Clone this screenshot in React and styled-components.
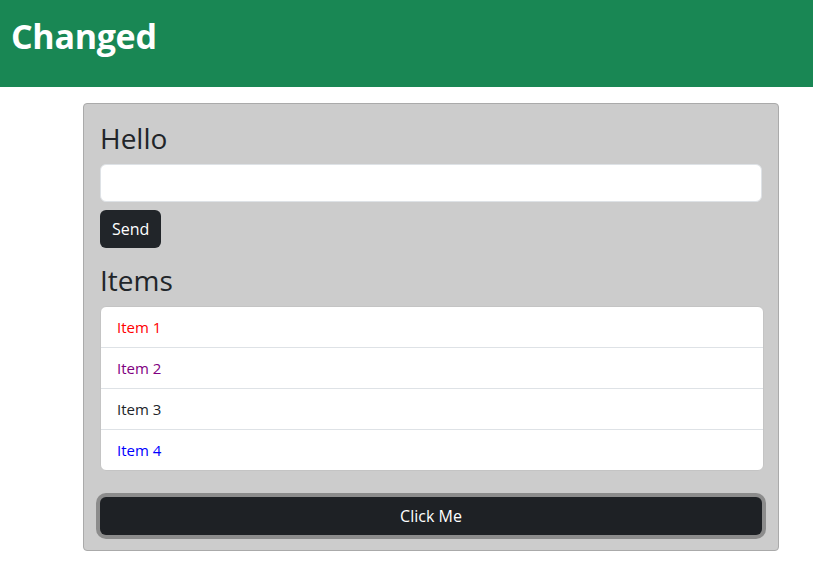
import React from 'react';
import styled, { createGlobalStyle } from 'styled-components';

const GlobalStyle = createGlobalStyle`
  body {
    margin: 0;
    font-family: "Open Sans", "Noto Sans", sans-serif;
    color: #212529;
    background: #fff;
  }
`;

const items = [
  { label: 'Item 1', color: '#ff0000' },
  { label: 'Item 2', color: '#800080' },
  { label: 'Item 3', color: '#212529' },
  { label: 'Item 4', color: '#0000ff' },
];

const App = () => {
  return (
    <>
      <GlobalStyle />
      <Header>
        <Title>Changed</Title>
      </Header>
      <Card>
        <Heading>Hello</Heading>
        <Input type="text" />
        <SendBtn>Send</SendBtn>
        <Heading className="items">Items</Heading>
        <List>
          {items.map((item) => (
            <ListItem key={item.label} $color={item.color}>
              {item.label}
            </ListItem>
          ))}
        </List>
        <ClickBtn>Click Me</ClickBtn>
      </Card>
    </>
  );
};

const Header = styled.header`
  display: flex;
  align-items: flex-start;
  height: 87px;
  padding: 16px 11px 0;
  box-sizing: border-box;
  background-color: #198754;
`;
const Title = styled.h1`
  margin: 0;
  font-size: 34px;
  font-weight: 700;
  line-height: 1.2;
  color: #fff;
  letter-spacing: -0.3px;
`;
const Card = styled.div`
  display: flex;
  flex-direction: column;
  align-items: flex-start;
  width: 696px;
  margin: 16px 0 0 83px;
  padding: 18px 16px 15px;
  box-sizing: border-box;
  background-color: #cccccc;
  border: 1px solid #aaaaaa;
  border-radius: 4px;
`;
const Heading = styled.h3`
  margin: 0 0 8px;
  font-size: 28px;
  font-weight: 500;
  line-height: 1.2;

  &.items {
    margin-top: 16px;
    margin-bottom: 9px;
  }
`;
const Input = styled.input`
  width: 100%;
  height: 38px;
  box-sizing: border-box;
  border: 1px solid #dee2e6;
  border-radius: 6px;
  background: #fff;
  margin-bottom: 8px;
`;
const SendBtn = styled.button`
  height: 38px;
  padding: 0 12px;
  border: none;
  border-radius: 6px;
  background-color: #212529;
  color: #fff;
  font-family: inherit;
  font-size: 16px;
`;
const List = styled.ul`
  width: 100%;
  margin: 0;
  padding: 0;
  list-style: none;
  background: #fff;
  border: 1px solid #c4c4c4;
  border-radius: 6px;
  overflow: hidden;
`;
const ListItem = styled.li`
  padding: 8px 16px;
  line-height: 24px;
  font-size: 15px;
  color: ${({ $color }) => $color};
  border-top: 1px solid #dee2e6;

  &:first-child {
    border-top: none;
  }
`;
const ClickBtn = styled.button`
  width: 100%;
  height: 38px;
  margin-top: 26px;
  border: none;
  border-radius: 6px;
  background-color: #1e2125;
  box-shadow: 0 0 0 4px #8c8c8c;
  color: #fff;
  font-family: inherit;
  font-size: 16px;
`;

export default App;
